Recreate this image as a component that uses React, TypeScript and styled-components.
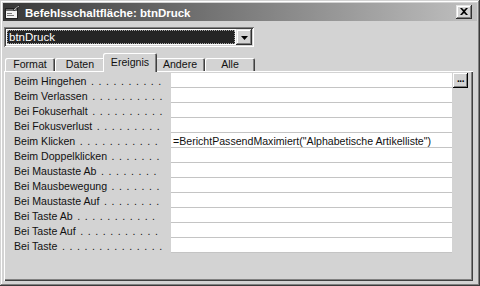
import React from "react";
import styled, { createGlobalStyle, css } from "styled-components";

const GlobalStyle = createGlobalStyle`
  html, body {
    margin: 0;
    padding: 0;
    background: #d3d3d3;
  }
  body {
    font-family: "Liberation Sans", Arial, sans-serif;
  }
`;

// name and how many leader dots follow it
const events: [string, number][] = [
  ["Beim Hingehen", 10],
  ["Beim Verlassen", 10],
  ["Bei Fokuserhalt", 10],
  ["Bei Fokusverlust", 9],
  ["Beim Klicken", 11],
  ["Beim Doppelklicken", 7],
  ["Bei Maustaste Ab", 8],
  ["Bei Mausbewegung", 7],
  ["Bei Maustaste Auf", 8],
  ["Bei Taste Ab", 11],
  ["Bei Taste Auf", 11],
  ["Bei Taste", 14],
];

const values: Record<number, string> = {
  4: '=BerichtPassendMaximiert("Alphabetische Artikelliste")',
};

const tabs = ["Format", "Daten", "Ereignis", "Andere", "Alle"];

const App = () => {
  return (
    <>
      <GlobalStyle />
      <Window>
        <TitleBar>
          <TitleIcon width="16" height="16" viewBox="0 0 16 16">
            <rect x="1.5" y="4.5" width="12" height="10" fill="#f2f2f2" stroke="#202020" />
            <rect x="2" y="5" width="11" height="2" fill="#6a6a6a" />
            <rect x="3" y="9" width="5" height="1" fill="#7a7a7a" />
            <rect x="3" y="11" width="7" height="1" fill="#7a7a7a" />
            <path d="M9 6 L15 1 L15 3.5 L13.5 3.5 L11 6.5 Z" fill="#ffffff" stroke="#202020" strokeWidth="0.8" />
          </TitleIcon>
          <Title>Befehlsschaltfläche: btnDruck</Title>
          <CloseButton>
            <svg width="8" height="7" viewBox="0 0 8 7">
              <path d="M0 0 L2 0 L4 2 L6 0 L8 0 L5 3.5 L8 7 L6 7 L4 5 L2 7 L0 7 L3 3.5 Z" fill="#000" />
            </svg>
          </CloseButton>
        </TitleBar>
        <Body>
          <Combo>
            <ComboField>btnDruck</ComboField>
            <DropButton>
              <svg width="7" height="4" viewBox="0 0 7 4">
                <path d="M0 0 L7 0 L3.5 4 Z" fill="#000" />
              </svg>
            </DropButton>
          </Combo>
          <TabStrip>
            {tabs.map((t) => (
              <Tab key={t} $active={t === "Ereignis"}>
                {t}
              </Tab>
            ))}
          </TabStrip>
          <Panel>
            <Grid>
              {events.map(([name, dots], i) => (
                <Row key={name}>
                  <Label>
                    {name}
                    <Dots>{" .".repeat(dots)}</Dots>
                  </Label>
                  <Value>{values[i] || ""}</Value>
                  <BuildSlot>{i === 0 && <BuildButton>...</BuildButton>}</BuildSlot>
                </Row>
              ))}
            </Grid>
          </Panel>
        </Body>
      </Window>
    </>
  );
};

const Window = styled.div`
  width: 480px;
  height: 286px;
  box-sizing: border-box;
  padding: 3px;
  background: #d3d3d3;
  box-shadow: inset -1px -1px #3a3a3a, inset 1px 1px #d3d3d3,
    inset -2px -2px #808080, inset 2px 2px #ffffff;
  display: flex;
  flex-direction: column;
`;

const TitleBar = styled.div`
  height: 18px;
  display: flex;
  align-items: center;
  padding: 0 5px 0 1px;
  background: linear-gradient(to right, #383838, #c0c0c0);
`;

const TitleIcon = styled.svg`
  flex: none;
  margin-right: 5px;
`;

const Title = styled.span`
  flex: 1;
  color: #ffffff;
  font-weight: bold;
  font-size: 11.5px;
  padding-top: 1px;
  white-space: nowrap;
`;

const raised = css`
  background: #d3d3d3;
  box-shadow: inset -1px -1px #303030, inset 1px 1px #e4e4e4,
    inset -2px -2px #808080, inset 2px 2px #ffffff;
`;

const CloseButton = styled.div`
  ${raised};
  width: 16px;
  height: 14px;
  display: flex;
  align-items: center;
  justify-content: center;
  padding-bottom: 1px;
  box-sizing: border-box;
`;

const Body = styled.div`
  flex: 1;
  display: flex;
  flex-direction: column;
  padding: 6px 4px 2px 1px;
`;

const Combo = styled.div`
  width: 250px;
  height: 20px;
  box-sizing: border-box;
  padding: 2px;
  display: flex;
  background: #ffffff;
  box-shadow: inset 1px 1px #808080, inset -1px -1px #ffffff,
    inset 2px 2px #404040, inset -2px -2px #d3d3d3;
`;

const ComboField = styled.div`
  flex: 1;
  margin: 1px;
  padding-left: 1px;
  background: #252525;
  border: 1px dotted #a8a8a8;
  color: #ffffff;
  font-size: 11.5px;
  line-height: 12px;
`;

const DropButton = styled.div`
  ${raised};
  width: 16px;
  height: 16px;
  display: flex;
  align-items: center;
  justify-content: center;
  padding-top: 1px;
  box-sizing: border-box;
`;

const TabStrip = styled.div`
  height: 18px;
  margin-top: 6px;
  padding-left: 1px;
  display: flex;
  align-items: flex-end;
  position: relative;
  z-index: 1;
`;

const Tab = styled.div<{ $active?: boolean }>`
  width: 50px;
  height: 13px;
  box-sizing: border-box;
  text-align: center;
  font-size: 10.6px;
  line-height: 13px;
  color: #111;
  background: #d3d3d3;
  border-radius: 2px 2px 0 0;
  box-shadow: inset 1px 1px #ffffff, inset -1px 0 #404040,
    inset -2px 0 #808080;
  ${(props) =>
    props.$active &&
    css`
      position: relative;
      z-index: 2;
      width: 54px;
      height: 19px;
      margin: 0 -2px -1px;
      padding-top: 3px;
    `}
`;

const Panel = styled.div`
  flex: 1;
  box-sizing: border-box;
  padding: 2px 5px 0 6px;
  background: #d3d3d3;
  box-shadow: inset 1px 1px #ffffff, inset -1px -1px #404040,
    inset -2px -2px #808080;
`;

const Grid = styled.div`
  display: flex;
  flex-direction: column;
`;

const Row = styled.div`
  display: flex;
  height: 15px;
  font-size: 10.6px;
  line-height: 14px;
  color: #111;
`;

const Label = styled.div`
  width: 161px;
  box-sizing: border-box;
  padding: 1px 4px 0 4px;
  white-space: pre;
`;

const Dots = styled.span`
  word-spacing: 1.6px;
`;

const Value = styled.div`
  width: 281px;
  box-sizing: border-box;
  padding: 1px 0 0 2px;
  background: #ffffff;
  border-bottom: 1px solid #c4c4c4;
  white-space: nowrap;
`;

const BuildSlot = styled.div`
  width: 15px;
  margin-left: 1px;
`;

const BuildButton = styled.div`
  width: 15px;
  height: 15px;
  box-sizing: border-box;
  background: #d3d3d3;
  box-shadow: inset -1px -1px #000000, inset 1px 1px #ffffff,
    inset -2px -2px #808080;
  font-size: 10px;
  font-weight: bold;
  line-height: 12px;
  text-align: center;
  letter-spacing: -0.5px;
  color: #000;
`;

export default App;
